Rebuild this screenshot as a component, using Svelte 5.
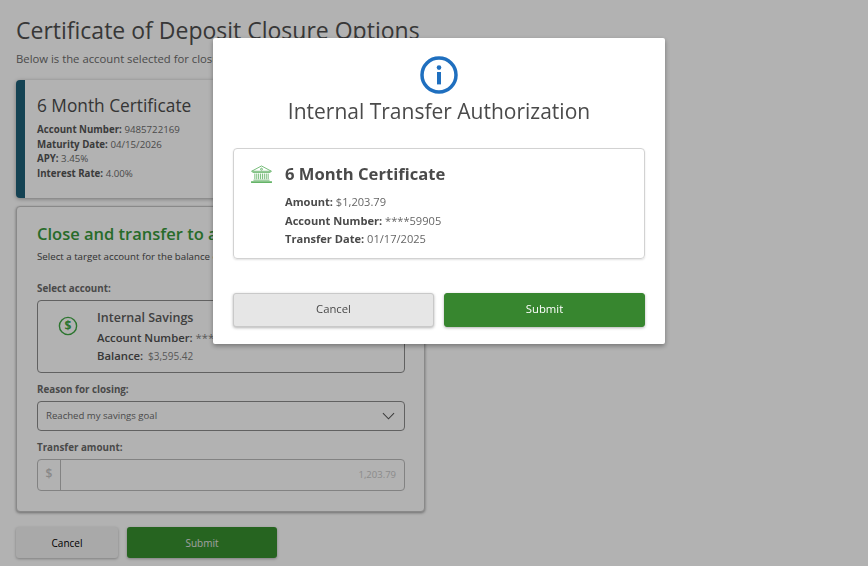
<script>
  let certificate = {
    name: "6 Month Certificate",
    details: [
      ["Account Number:", "9485722169"],
      ["Maturity Date:", "04/15/2026"],
      ["APY:", "3.45%"],
      ["Interest Rate:", "4.00%"]
    ]
  };
  let transfer = [
    ["Amount:", "$1,203.79"],
    ["Account Number:", "****59905"],
    ["Transfer Date:", "01/17/2025"]
  ];
</script>

<div class="page">
  <h1>Certificate of Deposit Closure Options</h1>
  <p class="intro">Below is the account selected for closure.</p>

  <!-- Selected certificate -->
  <div class="cert-card">
    <h2>{certificate.name}</h2>
    {#each certificate.details as [label, value]}
      <p><strong>{label}</strong> {value}</p>
    {/each}
  </div>

  <!-- Transfer form -->
  <div class="form-card">
    <h2>Close and transfer to another account</h2>
    <p class="hint">Select a target account for the balance of the certificate.</p>

    <div class="label first">Select account:</div>
    <div class="account">
      <svg class="dollar" viewBox="0 0 20 20" width="20" height="20" aria-hidden="true">
        <circle cx="10" cy="10" r="8.6" fill="none" stroke="#3fa844" stroke-width="1.4" />
        <text x="10" y="14.2" text-anchor="middle" font-size="12" font-weight="700" fill="#3fa844" font-family="Open Sans, sans-serif">$</text>
      </svg>
      <div class="account-info">
        <div class="account-name">Internal Savings</div>
        <div class="account-line"><strong>Account Number:</strong> ****12345</div>
        <div class="account-line"><strong>Balance:</strong> <span>$3,595.42</span></div>
      </div>
    </div>

    <div class="label">Reason for closing:</div>
    <div class="select">
      <span>Reached my savings goal</span>
      <svg viewBox="0 0 14 8" width="13" height="8" aria-hidden="true">
        <path d="M1 1l6 6 6-6" fill="none" stroke="#555" stroke-width="1.1" />
      </svg>
    </div>

    <div class="label">Transfer amount:</div>
    <div class="amount">
      <div class="prefix">$</div>
      <div class="amount-value">1,203.79</div>
    </div>
  </div>

  <div class="page-actions">
    <button class="page-cancel">Cancel</button>
    <button class="page-submit">Submit</button>
  </div>
</div>

<div class="overlay"></div>

<!-- Authorization dialog -->
<div class="modal">
  <svg class="info" viewBox="0 0 38 38" width="38" height="38" aria-hidden="true">
    <circle cx="19" cy="19" r="17" fill="none" stroke="#1f6fbf" stroke-width="3.5" />
    <circle cx="19" cy="11.6" r="2.3" fill="#1f6fbf" />
    <rect x="17" y="16" width="4" height="12.4" fill="#1f6fbf" />
  </svg>
  <h2 class="modal-title">Internal Transfer Authorization</h2>

  <div class="summary">
    <svg class="bank" viewBox="0 0 24 20" width="23" height="19" aria-hidden="true">
      <g fill="none" stroke="#4da851" stroke-width="0.8">
        <path d="M1.5 6.6L12 1l10.5 5.6z" />
        <circle cx="12" cy="4.4" r="1" />
        <path d="M2.5 7.8h19M3.5 16h17" />
        <path d="M5 9v6M7 9v6M9 9v6M11 9v6M13 9v6M15 9v6M17 9v6M19 9v6" />
      </g>
      <rect x="1" y="17.2" width="22" height="1.6" fill="#4da851" />
    </svg>
    <div class="summary-body">
      <h3>6 Month Certificate</h3>
      {#each transfer as [label, value]}
        <p><strong>{label}</strong> {value}</p>
      {/each}
    </div>
  </div>

  <div class="modal-actions">
    <button class="modal-cancel">Cancel</button>
    <button class="modal-submit">Submit</button>
  </div>
</div>

<style>
  :global(body) {
    margin: 0;
    background: #fff;
    font-family: "Open Sans", sans-serif;
    color: #3f3f3f;
  }

  .page {
    padding: 15px 16px 0;
    height: 551px;
    overflow: hidden;
  }

  h1 {
    margin: 0;
    font-size: 23px;
    line-height: 30px;
    font-weight: 500;
    color: #505050;
  }

  .intro {
    margin: 6px 0 0;
    font-size: 11.3px;
    line-height: 16px;
    color: #6c6c6c;
  }

  /* Certificate card */
  .cert-card {
    width: 409px;
    height: 118px;
    box-sizing: border-box;
    margin-top: 13px;
    padding: 14px 12px 0 12px;
    background: #fff;
    border-left: 9px solid #1e5f78;
    border-radius: 4px;
    box-shadow: 0 1px 4px rgba(0, 0, 0, 0.35);
  }

  .cert-card h2 {
    margin: 0 0 5px;
    font-size: 17.3px;
    line-height: 24px;
    font-weight: 400;
    color: #4c4c4c;
  }

  .cert-card p {
    margin: 0;
    font-size: 9.7px;
    line-height: 14.5px;
    color: #6c6c6c;
  }

  .cert-card strong {
    font-weight: 700;
    color: #555;
  }

  /* Form card */
  .form-card {
    width: 409px;
    height: 306px;
    box-sizing: border-box;
    margin-top: 8px;
    padding: 15px 19px 0 20px;
    background: #fff;
    border: 1px solid #c4c4c4;
    border-radius: 4px;
    box-shadow: 0 1px 3px rgba(0, 0, 0, 0.4);
  }

  .form-card h2 {
    margin: 0;
    font-size: 16.5px;
    line-height: 24px;
    font-weight: 600;
    color: #389a3c;
    white-space: nowrap;
  }

  .hint {
    margin: 4px 0 0;
    font-size: 9.7px;
    line-height: 14px;
    color: #484848;
    white-space: nowrap;
  }

  .label {
    margin: 10px 0 4px;
    font-size: 9.8px;
    line-height: 14px;
    font-weight: 700;
    color: #6a6a6a;
  }

  .label.first {
    margin-top: 18px;
  }

  .account {
    display: flex;
    height: 73px;
    box-sizing: border-box;
    padding: 8px 0 0 20px;
    border: 1px solid #8c8c8c;
    border-radius: 4px;
  }

  .dollar {
    margin-top: 7px;
  }

  .account-info {
    margin-left: 19px;
  }

  .account-name {
    font-size: 12.5px;
    line-height: 18px;
    font-weight: 600;
    color: #5c5c5c;
  }

  .account-line {
    margin-top: 3px;
    font-size: 11.3px;
    line-height: 15px;
    color: #808080;
  }

  .account-line strong {
    font-weight: 600;
    color: #505050;
  }

  .account-line span {
    margin-left: 2px;
    font-size: 10px;
  }

  .select {
    display: flex;
    align-items: center;
    justify-content: space-between;
    height: 30px;
    box-sizing: border-box;
    padding: 0 9px 1px 8px;
    border: 1px solid #8c8c8c;
    border-radius: 4px;
    font-size: 9.6px;
    color: #6c6c6c;
  }

  .amount {
    display: flex;
    height: 32px;
    box-sizing: border-box;
    border: 1px solid #bbb;
    border-radius: 4px;
  }

  .prefix {
    width: 22px;
    border-right: 1px solid #bbb;
    text-align: center;
    font-size: 12px;
    line-height: 28px;
    font-weight: 600;
    color: #c4c4c4;
  }

  .amount-value {
    flex: 1;
    padding-right: 8px;
    text-align: right;
    font-size: 9.5px;
    line-height: 30px;
    color: #c8c8c8;
  }

  /* Page buttons */
  .page-actions {
    display: flex;
    gap: 9px;
    margin-top: 15px;
  }

  button {
    font-family: inherit;
    padding: 0;
    cursor: pointer;
  }

  .page-cancel {
    width: 102px;
    height: 31px;
    border: none;
    border-radius: 3px;
    background: #f2f2f2;
    color: #000;
    font-size: 10px;
    font-weight: 500;
    box-shadow: 0 1px 3px rgba(0, 0, 0, 0.3);
  }

  .page-submit {
    width: 150px;
    height: 31px;
    border: none;
    border-radius: 3px;
    background: #37902f;
    color: #e4e4e4;
    font-size: 10px;
    font-weight: 500;
    box-shadow: 0 1px 3px rgba(0, 0, 0, 0.3);
  }

  .overlay {
    position: fixed;
    inset: 0;
    background: rgba(0, 0, 0, 0.3);
  }

  /* Dialog */
  .modal {
    position: fixed;
    left: 213px;
    top: 38px;
    width: 452px;
    height: 306px;
    box-sizing: border-box;
    padding: 18px 20px 0;
    display: flex;
    flex-direction: column;
    align-items: center;
    background: #fff;
    border-radius: 2px;
    box-shadow: 0 2px 5px rgba(0, 0, 0, 0.35);
  }

  .info {
    flex: none;
  }

  .modal-title {
    margin: 3px 0 0;
    font-size: 21px;
    line-height: 28px;
    font-weight: 500;
    color: #4a4a4a;
  }

  .summary {
    display: flex;
    align-self: stretch;
    height: 111px;
    box-sizing: border-box;
    margin-top: 23px;
    padding: 15px 0 0 16px;
    border: 1px solid #d2d2d2;
    border-radius: 4px;
    box-shadow: 0 1px 2px rgba(0, 0, 0, 0.12);
  }

  .bank {
    margin-top: 1px;
  }

  .summary-body {
    margin-left: 12px;
  }

  .summary h3 {
    margin: 0 0 9px;
    font-size: 16.6px;
    line-height: 20px;
    font-weight: 700;
    color: #4a4a4a;
  }

  .summary p {
    margin: 0;
    font-size: 11.1px;
    line-height: 18.7px;
    color: #666;
  }

  .summary strong {
    font-weight: 700;
    color: #4a4a4a;
  }

  .modal-actions {
    display: flex;
    gap: 10px;
    align-self: stretch;
    margin-top: 34px;
  }

  .modal-cancel,
  .modal-submit {
    flex: 1;
    height: 34px;
    padding-bottom: 3px;
    border-radius: 3px;
    font-size: 11.3px;
    font-weight: 500;
    box-shadow: 0 1px 3px rgba(0, 0, 0, 0.3);
  }

  .modal-cancel {
    background: #e6e6e6;
    border: 1px solid #c9c9c9;
    color: #4a4a4a;
  }

  .modal-submit {
    background: #37862f;
    border: 1px solid #37862f;
    color: #fff;
  }
</style>
